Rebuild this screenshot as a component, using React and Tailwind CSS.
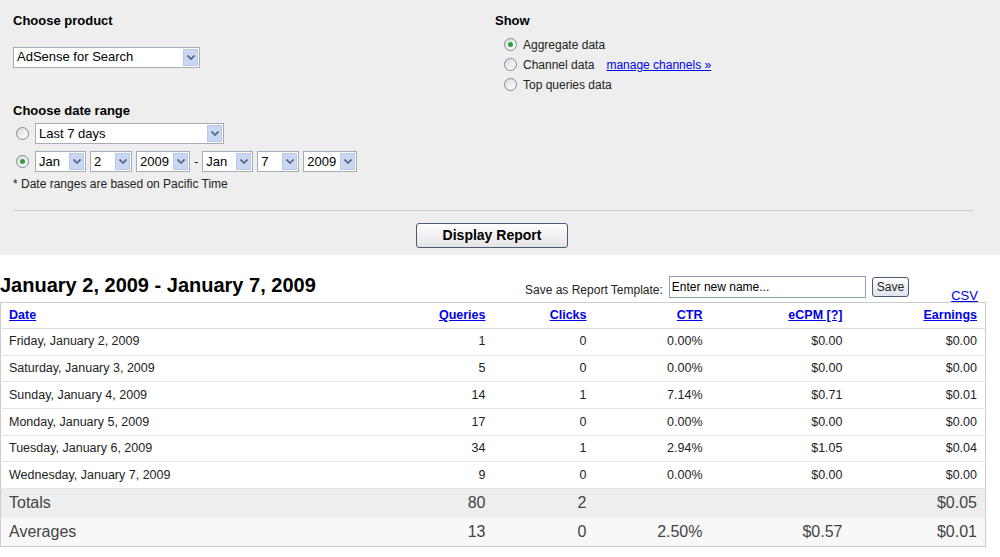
const rows = [
  ["Friday, January 2, 2009", "1", "0", "0.00%", "$0.00", "$0.00"],
  ["Saturday, January 3, 2009", "5", "0", "0.00%", "$0.00", "$0.00"],
  ["Sunday, January 4, 2009", "14", "1", "7.14%", "$0.71", "$0.01"],
  ["Monday, January 5, 2009", "17", "0", "0.00%", "$0.00", "$0.00"],
  ["Tuesday, January 6, 2009", "34", "1", "2.94%", "$1.05", "$0.04"],
  ["Wednesday, January 7, 2009", "9", "0", "0.00%", "$0.00", "$0.00"],
];

const colW = ["w-[390px]", "w-[103px]", "w-[101px]", "w-[116px]", "w-[140px]", ""];

function Select({ label, w }) {
  return (
    <div className={`flex items-center h-[21px] bg-white border border-[#a5acb5] ${w}`}>
      <span className="flex-1 px-[3px] text-[13px] text-black truncate">{label}</span>
      <span className="w-[15px] h-[17px] mr-[1px] bg-[#c9d7f1] border border-[#b8c8e8] flex items-center justify-center">
        <svg width="8" height="5" viewBox="0 0 8 5"><path d="M0.5 0.5 L4 4 L7.5 0.5" stroke="#4d6185" strokeWidth="1.6" fill="none" /></svg>
      </span>
    </div>
  );
}

function Radio({ on }) {
  return (
    <span className="w-[13px] h-[13px] rounded-full border border-[#7a8a9a] bg-gradient-to-br from-[#dcdcdc] to-white flex items-center justify-center">
      {on && <span className="w-[5px] h-[5px] rounded-full bg-[#2e9e3a]" />}
    </span>
  );
}

export default function App() {
  return (
    <div className="w-[1000px] h-[557px] bg-white text-[12px] text-[#222]" style={{ fontFamily: '"Liberation Sans", Arial, sans-serif' }}>
      <div className="bg-[#eeeeee] h-[255px] px-[13px] pt-[11px]">
        <div className="flex">
          <div className="w-[482px]">
            <div className="font-bold text-[13px] text-black">Choose product</div>
            <div className="mt-[16px]"><Select label="AdSense for Search" w="w-[187px]" /></div>
            <div className="font-bold text-[13px] text-black mt-[33px]">Choose date range</div>
            <div className="flex items-center gap-[6px] mt-[3px] ml-[3px]">
              <Radio /><Select label="Last 7 days" w="w-[189px]" />
            </div>
            <div className="flex items-center gap-[4px] mt-[7px] ml-[3px]">
              <span className="mr-[2px]"><Radio on /></span>
              <Select label="Jan" w="w-[51px]" />
              <Select label="2" w="w-[42px]" />
              <Select label="2009" w="w-[54px]" />
              <span className="text-[13px]">-</span>
              <Select label="Jan" w="w-[51px]" />
              <Select label="7" w="w-[42px]" />
              <Select label="2009" w="w-[54px]" />
            </div>
            <div className="text-[12px] mt-[3px]">* Date ranges are based on Pacific Time</div>
          </div>
          <div>
            <div className="font-bold text-[13px] text-black">Show</div>
            <div className="flex flex-col gap-[2px] mt-[5px] ml-[9px] text-[12px]">
              <div className="flex items-center gap-[6px] h-[18px]"><Radio on />Aggregate data</div>
              <div className="flex items-center gap-[6px] h-[18px]"><Radio />Channel data <a className="text-[#0000ee] underline ml-[6px]">manage channels »</a></div>
              <div className="flex items-center gap-[6px] h-[18px]"><Radio />Top queries data</div>
            </div>
          </div>
        </div>
        <div className="border-t border-[#cccccc] mt-[17px] w-[960px]" />
        <div className="flex justify-center mt-[12px] pr-[16px]">
          <button className="w-[152px] h-[25px] rounded-[3px] border border-[#4a5a75] bg-gradient-to-b from-white to-[#e4e4e4] font-bold text-[14px] text-black">Display Report</button>
        </div>
      </div>
      <div className="flex items-start mt-[20px] h-[27px]">
        <div className="text-[20px] font-bold text-black leading-none w-[525px]">January 2, 2009 - January 7, 2009</div>
        <div className="flex items-center gap-[6px]">
          <span className="text-[12px] mt-[6px]">Save as Report Template:</span>
          <div className="w-[197px] h-[22px] border border-[#8aa0bb] bg-white px-[2px] text-[12px] text-black flex items-center">Enter new name...</div>
          <button className="h-[20px] px-[4px] rounded-[3px] border border-[#4a5a75] bg-gradient-to-b from-white to-[#dde4ee] text-[12px]">Save</button>
        </div>
        <a className="text-[#0000ee] underline text-[13px] ml-[42px] mt-[11px]">CSV</a>
      </div>
      <table className="w-[986px] border border-[#cccccc] border-collapse text-[12.5px]">
        <thead>
          <tr className="h-[26px] border-b border-[#dddddd]">
            {["Date", "Queries", "Clicks", "CTR", "eCPM [?]", "Earnings"].map((h, i) => (
              <th key={h} className={`font-bold ${i === 0 ? "text-left pl-[8px]" : "text-right pr-[8px]"} ${colW[i]}`}>
                <a className="text-[#0000ee] underline">{h}</a>
              </th>
            ))}
          </tr>
        </thead>
        <tbody>
          {rows.map((r) => (
            <tr key={r[0]} className="h-[26.7px] border-b border-[#e4e4e4]">
              {r.map((c, i) => (
                <td key={i} className={i === 0 ? "text-left pl-[8px]" : "text-right pr-[8px]"}>{c}</td>
              ))}
            </tr>
          ))}
          <tr className="h-[29px] bg-[#eeeeee] text-[16px] text-[#444]">
            <td className="pl-[8px]">Totals</td>
            <td className="pr-[8px] text-right">80</td>
            <td className="pr-[8px] text-right">2</td>
            <td></td><td></td>
            <td className="pr-[8px] text-right">$0.05</td>
          </tr>
          <tr className="h-[29px] bg-[#f8f8f8] text-[16px] text-[#444]">
            <td className="pl-[8px]">Averages</td>
            <td className="pr-[8px] text-right">13</td>
            <td className="pr-[8px] text-right">0</td>
            <td className="pr-[8px] text-right">2.50%</td>
            <td className="pr-[8px] text-right">$0.57</td>
            <td className="pr-[8px] text-right">$0.01</td>
          </tr>
        </tbody>
      </table>
    </div>
  );
}
